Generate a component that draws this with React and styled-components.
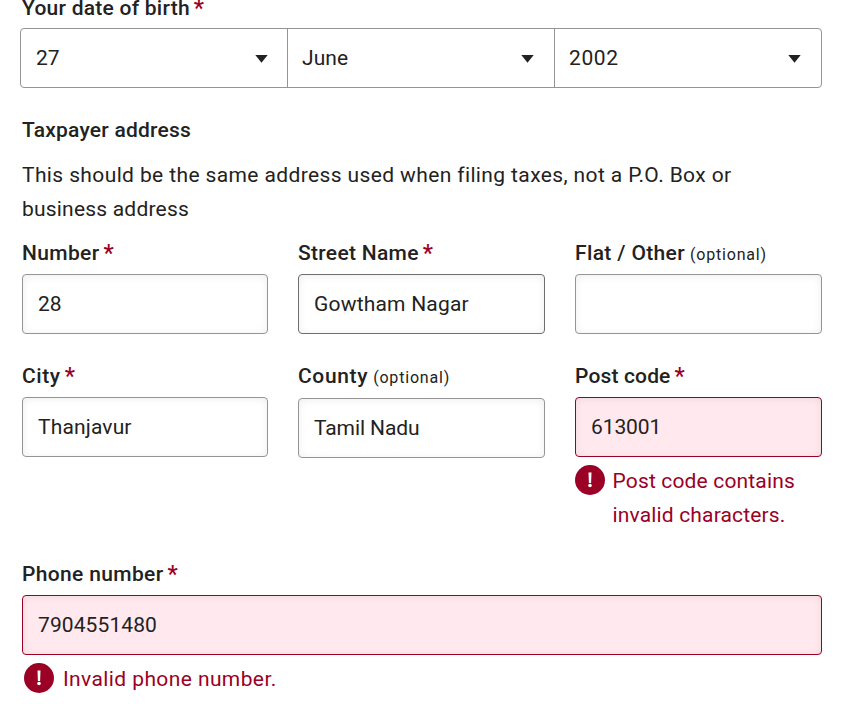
import React from "react";
import styled, { createGlobalStyle } from "styled-components";

const ink = "#222222";
const danger = "#9b0025";

const Global = createGlobalStyle`
  * { box-sizing: border-box; }
  body {
    margin: 0;
    overflow: hidden;
    background: #fff;
    color: ${ink};
    font-family: Roboto, "Liberation Sans", sans-serif;
    font-size: 21px;
    line-height: 34px;
    letter-spacing: 0.4px;
  }
`;

const Form = styled.main`
  display: flex;
  flex-direction: column;
  width: 867px;
  height: 711px;
  padding: 0 45px 0 22px;
  overflow: hidden;
`;

const Label = styled.div`
  display: flex;
  align-items: baseline;
  height: 34px;
  margin-bottom: ${(p) => p.$gap ?? 4}px;
  font-weight: 500;
  letter-spacing: ${(p) => p.$track ?? 0.25}px;
  white-space: nowrap;
`;

const Star = styled.span`
  margin-left: 4px;
  color: ${danger};
  font-size: 23px;
  line-height: 30px;
  letter-spacing: 0;
  transform: translateY(1px);
`;

const Optional = styled.span`
  margin-left: 5px;
  font-size: 16px;
  font-weight: 400;
  letter-spacing: 0.8px;
`;

const DateSection = styled.section`
  margin-top: -9px;
`;

const DateGroup = styled.div`
  display: grid;
  grid-template-columns: 266px 267px 1fr;
  width: 802px;
  height: 60px;
  margin-left: -2px;
  border: 1px solid #949494;
  border-radius: 4px;
`;

const DateSelect = styled.div`
  display: flex;
  align-items: center;
  justify-content: space-between;
  padding: 0 19px 0 15px;
  letter-spacing: ${(p) => p.$track ?? 0.4}px;

  & + & {
    padding-left: 14px;
    padding-right: 20px;
    border-left: 1px solid #949494;
  }
`;

const Caret = styled.svg`
  width: 13px;
  height: 8px;
  margin-top: 1px;
  fill: ${ink};
`;

const Heading = styled.h2`
  margin: 25px 0 11px;
  font-size: 21px;
  font-weight: 500;
  letter-spacing: 0.23px;
`;

const Hint = styled.p`
  margin: 0 0 10px;
  letter-spacing: 0.38px;
`;

const HintEnd = styled.span`
  letter-spacing: 0.2px;
`;

const Grid = styled.section`
  display: grid;
  grid-template-columns: 246px 247px 247px;
  gap: 25px 30px;
`;

const Cell = styled.div`
  min-width: 0;
`;

const Field = styled.div`
  display: flex;
  align-items: center;
  height: 60px;
  padding: 0 15px;
  border: 1px solid ${(p) => (p.$invalid ? danger : p.$active ? "#6e6e6e" : "#949494")};
  border-radius: 4px;
  background: ${(p) => (p.$invalid ? "#ffe9ee" : "#fff")};
  box-shadow: inset 0 1px 8px rgba(0, 0, 0, 0.07);
  letter-spacing: ${(p) => p.$track ?? 0.15}px;
`;

const ErrorRow = styled.div`
  display: flex;
  align-items: flex-start;
  gap: ${(p) => (p.$indent ? 9 : 7.5)}px;
  margin-top: 7px;
  padding-left: ${(p) => p.$indent ?? 0}px;
  color: ${danger};
  letter-spacing: ${(p) => p.$track ?? 0.4}px;
`;

const ErrorIcon = styled.svg`
  flex: none;
  width: 30px;
  height: 30px;
  margin-top: 1px;
`;

const PhoneSection = styled.section`
  margin-top: 25px;
`;

function DatePart({ value, track }) {
  return (
    <DateSelect $track={track}>
      {value}
      <Caret viewBox="0 0 13 8"><path d="M.3 0h12.4L6.5 7.8Z" /></Caret>
    </DateSelect>
  );
}

function FieldLabel({ text, required, gap, track }) {
  return (
    <Label $gap={gap} $track={track}>
      {text}
      {required ? <Star>*</Star> : <Optional>(optional)</Optional>}
    </Label>
  );
}

function ErrorMessage({ children, indent, track }) {
  return (
    <ErrorRow $indent={indent} $track={track}>
      <ErrorIcon viewBox="0 0 30 30">
        <circle cx="15" cy="15" r="15" fill={danger} />
        <path d="M13.5 7.5h3l-.4 10.4h-2.2z" fill="#fff" />
        <circle cx="15" cy="20.5" r="1.8" fill="#fff" />
      </ErrorIcon>
      <span>{children}</span>
    </ErrorRow>
  );
}

export default function App() {
  return (
    <>
      <Global />
      <Form>
        <DateSection>
          <FieldLabel text="Your date of birth" required gap={3} />
          <DateGroup>
            <DatePart value="27" track={0} />
            <DatePart value="June" track={0.1} />
            <DatePart value="2002" track={0.6} />
          </DateGroup>
        </DateSection>
        <Heading>Taxpayer address</Heading>
        <Hint>
          This should be the same address used when filing taxes, not a P.O. Box or
          <br />
          <HintEnd>business address</HintEnd>
        </Hint>
        <Grid>
          <Cell>
            <FieldLabel text="Number" required track={0.35} />
            <Field $track={0}>28</Field>
          </Cell>
          <Cell>
            <FieldLabel text="Street Name" required track={0.3} />
            <Field $active $track={0.2}>Gowtham Nagar</Field>
          </Cell>
          <Cell>
            <FieldLabel text="Flat / Other" track={0.36} />
            <Field />
          </Cell>
          <Cell>
            <FieldLabel text="City" required track={0.6} />
            <Field>Thanjavur</Field>
          </Cell>
          <Cell>
            <FieldLabel text="County" gap={5} track={0.65} />
            <Field $track={-0.1}>Tamil Nadu</Field>
          </Cell>
          <Cell>
            <FieldLabel text="Post code" required track={0.15} />
            <Field $invalid $track={-0.1}>613001</Field>
            <ErrorMessage track={0.16}>Post code contains<br />invalid characters.</ErrorMessage>
          </Cell>
        </Grid>
        <PhoneSection>
          <FieldLabel text="Phone number" required track={0.35} />
          <Field $invalid $track={0.1}>7904551480</Field>
          <ErrorMessage indent={2}>Invalid phone number.</ErrorMessage>
        </PhoneSection>
      </Form>
    </>
  );
}
